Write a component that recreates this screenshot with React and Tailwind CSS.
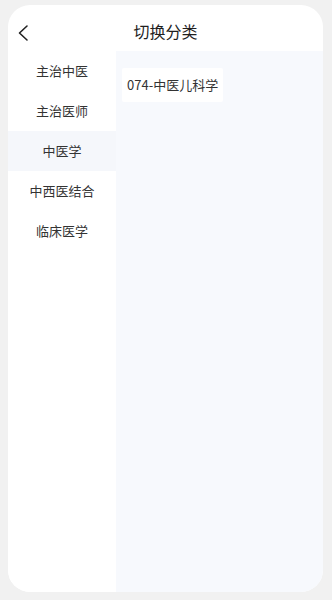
import React from "react";

const items = ["主治中医", "主治医师", "中医学", "中西医结合", "临床医学"];

export default function App() {
  return (
    <div
      className="w-[332px] h-[600px] bg-[#f1f1f1] pt-[5px] pl-[8px] pr-[9px] pb-[8px]"
      style={{ fontFamily: '"Noto Sans CJK SC", "Noto Sans", sans-serif' }}
    >
      <div className="h-[587px] rounded-[22px] bg-white overflow-hidden flex flex-col">
        <div className="relative h-[46px] shrink-0 flex items-center justify-center">
          <svg
            className="absolute left-[9px] top-[19px]"
            width="12"
            height="18"
            viewBox="0 0 12 18"
            fill="none"
          >
            <path d="M10 2 L2.5 9 L10 16" stroke="#222" strokeWidth="1.6" strokeLinecap="round" strokeLinejoin="round" />
          </svg>
          <span className="text-[16px] text-[#1f1f1f] mt-[6px]">切换分类</span>
        </div>
        <div className="flex flex-1">
          <div className="w-[108px] shrink-0 bg-white">
            {items.map((t, i) => (
              <div
                key={t}
                className={
                  "h-10 flex items-center justify-center text-[13px] text-[#333] " +
                  (i === 2 ? "bg-[#f5f7fb]" : "")
                }
              >
                {t}
              </div>
            ))}
          </div>
          <div className="flex-1 bg-[#f7f9fd] pt-[17px] pl-[6px]">
            <div className="inline-flex items-center h-[34px] px-[5px] bg-white rounded-[2px] text-[13px] text-[#333]">
              074-中医儿科学
            </div>
          </div>
        </div>
      </div>
    </div>
  );
}
